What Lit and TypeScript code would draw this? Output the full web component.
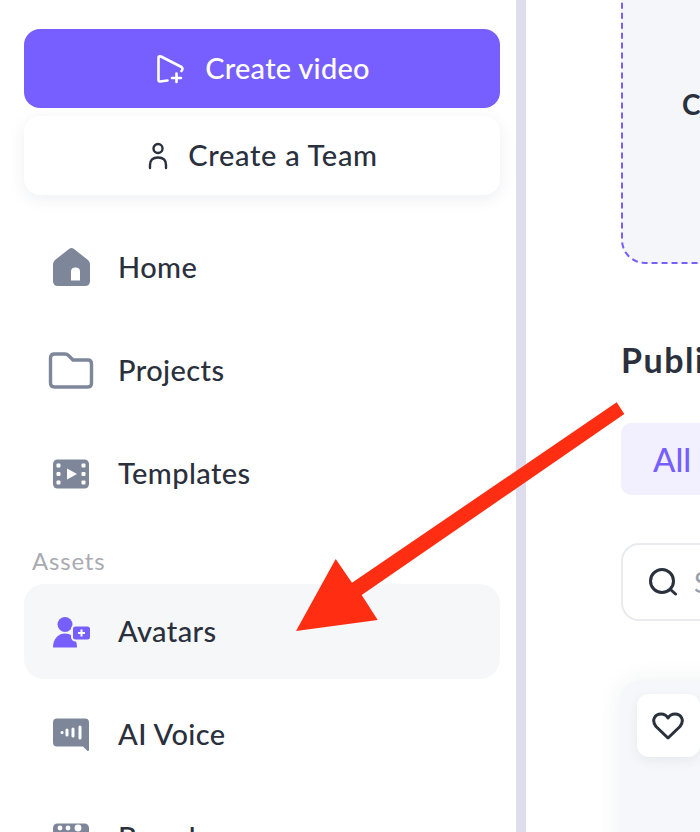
import { LitElement, html, css, svg } from "lit";
import { customElement } from "lit/decorators.js";

const navIcons = {
  home: svg`<path fill="#7e8799" d="M22 5Q24.5 3 27 5L41 16Q43 18 43 20V37Q43 42 38 42H11Q6 42 6 37V20Q6 18 8 16Z"/><path fill="#fff" d="M24 36.5V27.5Q24 23.5 28.5 23.5Q33 23.5 33 27.5V36.5Z"/>`,
  folder: svg`<path fill="none" stroke="#7e8799" stroke-width="3.4" stroke-linejoin="round" d="M3.5 11Q3.5 7 7.5 7H18Q20 7 21.5 8.5L26 13H41Q44.5 13 44.5 17V36Q44.5 40 41 40H7.5Q3.5 40 3.5 36Z"/>`,
  film: svg`<rect x="6" y="9.5" width="36" height="29" rx="4.5" fill="#7e8799"/><g fill="#fff"><rect x="9.5" y="13.5" width="4" height="4" rx="1"/><rect x="9.5" y="22" width="4" height="4" rx="1"/><rect x="9.5" y="30.5" width="4" height="4" rx="1"/><rect x="34.5" y="13.5" width="4" height="4" rx="1"/><rect x="34.5" y="22" width="4" height="4" rx="1"/><rect x="34.5" y="30.5" width="4" height="4" rx="1"/><path d="M20 18.5V29.5L30 24Z"/></g>`,
  avatar: svg`<g fill="#775fff"><circle cx="18" cy="16.5" r="7.5"/><path d="M6 39.5C6 30 12 25.5 18 25.5C24 25.5 30 30 30 39.5Z"/><rect x="25" y="17.5" width="19" height="15" rx="3.5" stroke="#f6f7f9" stroke-width="2"/></g><path fill="none" stroke="#fff" stroke-width="2" d="M34.5 21.5V28.5M31 25H38"/>`,
  voice: svg`<path fill="#7e8799" d="M10 7.5H38Q42 7.5 42 11.5V38.5Q42 41 40 39.5L36 35.5H10Q6 35.5 6 31.5V11.5Q6 7.5 10 7.5Z"/><g fill="none" stroke="#fff" stroke-width="3" stroke-linecap="round"><path d="M15 21.5H15.1M20 19V24M26 18V25M33 16V27"/></g>`,
  brand: svg`<rect x="6" y="9.5" width="36" height="29" rx="4.5" fill="#7e8799"/><g fill="#fff"><circle cx="13" cy="14" r="2.4"/><circle cx="21" cy="14" r="2.4"/><circle cx="31" cy="14" r="3.4"/></g>`,
};

@customElement("app-root")
export class AppRoot extends LitElement {
  static styles = css`
    :host {
      display: block;
      position: relative;
      width: 700px;
      height: 832px;
      overflow: hidden;
      background: #fff;
      font-family: "Lato", "Liberation Sans", sans-serif;
      color: #2a303c;
    }

    .layout {
      display: flex;
      height: 832px;
    }

    .sidebar {
      flex: none;
      box-sizing: border-box;
      width: 516px;
      padding: 29px 16px 0 24px;
    }

    .divider {
      flex: none;
      width: 10px;
      background: #dddded;
    }

    .btn {
      display: flex;
      align-items: center;
      justify-content: center;
      height: 79px;
      padding-left: 2px;
      border-radius: 16px;
      font-size: 29px;
      font-weight: 500;
    }

    .btn span,
    .item span {
      padding-bottom: 2px;
    }

    .btn.primary {
      gap: 19px;
      background: #775fff;
      color: #fff;
      letter-spacing: 0.25px;
      margin-bottom: 8px;
    }

    .btn.team {
      gap: 20px;
      background: #fff;
      letter-spacing: 0.7px;
      box-shadow: 0 4px 16px rgba(40, 50, 90, 0.08);
    }

    nav {
      display: flex;
      flex-direction: column;
      gap: 8px;
    }

    nav.top {
      margin-top: 25px;
    }

    .item {
      display: flex;
      align-items: center;
      gap: 23px;
      height: 95px;
      padding-left: 23px;
      border-radius: 20px;
      font-size: 29px;
      font-weight: 500;
      letter-spacing: 0.4px;
    }

    .item.active {
      background: #f6f7f9;
    }

    .item svg {
      flex: none;
    }

    .section {
      margin: 28px 0 11px 8px;
      line-height: 24px;
      font-size: 24px;
      letter-spacing: 0.8px;
      color: #a9abb1;
    }

    main {
      flex: none;
      box-sizing: border-box;
      width: 600px;
      padding-left: 95px;
    }

    .drop {
      box-sizing: border-box;
      height: 304px;
      margin-top: -40px;
      padding: 124px 0 0 59px;
      border: 2px dashed #775fff;
      border-radius: 24px;
      background: #f5f6f9;
      font-size: 28px;
      font-weight: 700;
      line-height: 36px;
      white-space: nowrap;
    }

    h2 {
      margin: 76px 0 0;
      font-size: 34px;
      font-weight: 700;
      letter-spacing: 1.5px;
      line-height: 40px;
      white-space: nowrap;
    }

    .tab {
      display: flex;
      align-items: center;
      box-sizing: border-box;
      width: 200px;
      height: 72px;
      margin-top: 43px;
      padding-left: 32px;
      border-radius: 10px;
      background: #f2f0fe;
      color: #775fff;
      font-size: 33px;
      font-weight: 500;
    }

    .search {
      display: flex;
      align-items: center;
      gap: 16px;
      box-sizing: border-box;
      height: 78px;
      margin-top: 48px;
      padding-left: 25px;
      border: 2px solid #eaebee;
      border-radius: 18px;
      color: #98a0ae;
      font-size: 28px;
    }

    .card {
      height: 300px;
      margin: 60px 0 0 -1px;
      padding: 13px 0 0 17px;
      border-radius: 20px;
      background: #f6f7fa;
      box-shadow: 0 0 24px rgba(40, 50, 90, 0.07);
    }

    .like {
      display: flex;
      align-items: center;
      justify-content: center;
      box-sizing: border-box;
      width: 63px;
      height: 63px;
      padding-right: 1px;
      border-radius: 12px;
      background: #fff;
      box-shadow: 0 4px 12px rgba(40, 50, 90, 0.07);
    }

    .arrow {
      position: absolute;
      inset: 0;
      pointer-events: none;
    }
  `;

  render() {
    return html`
      <div class="layout">
        <aside class="sidebar">
          <div class="btn primary">
            <svg width="30" height="30" viewBox="0 0 30 30" fill="none" stroke="#fff" stroke-width="2.6" stroke-linecap="round" stroke-linejoin="round">
              <path d="M11.5 26.5L4 27.5Q2.5 27.5 2.5 26V4Q2.5 1.5 5 2.5L25.5 13Q27.5 14.5 25.5 17"/>
              <path d="M20.5 19.5V28M16 24H25"/>
            </svg>
            <span>Create video</span>
          </div>
          <div class="btn team">
            <svg width="20" height="28" viewBox="0 0 20 28" fill="none" stroke="#2a303c" stroke-width="2.4" stroke-linecap="round">
              <circle cx="10" cy="6.5" r="4.5"/>
              <path d="M2 26V23Q2 15.5 10 15.5Q18 15.5 18 23V26"/>
            </svg>
            <span>Create a Team</span>
          </div>
          <nav class="top">
            ${this.renderItem("home", "Home")}
            ${this.renderItem("folder", "Projects")}
            ${this.renderItem("film", "Templates")}
          </nav>
          <div class="section">Assets</div>
          <nav>
            ${this.renderItem("avatar", "Avatars", true)}
            ${this.renderItem("voice", "AI Voice")}
            ${this.renderItem("brand", "Brand")}
          </nav>
        </aside>
        <div class="divider"></div>
        <main>
          <div class="drop">Create</div>
          <h2>Public Avatars</h2>
          <div class="tab">All</div>
          <div class="search">
            <svg width="30" height="28" viewBox="0 0 30 28" fill="none" stroke="#2a303c" stroke-width="3" stroke-linecap="round">
              <circle cx="14" cy="13" r="11.5"/>
              <path d="M23 22L27.5 26"/>
            </svg>
            <span>Search</span>
          </div>
          <div class="card">
            <div class="like">
              <svg width="32" height="28" viewBox="0 0 32 28" fill="none" stroke="#2a303c" stroke-width="3" stroke-linejoin="round">
                <path d="M16 26L4 14.5C-1 8 3 2 9 2C12 2 14.5 3.5 16 6C17.5 3.5 20 2 23 2C29 2 33 8 28 14.5Z"/>
              </svg>
            </div>
          </div>
        </main>
      </div>
      <svg class="arrow" width="700" height="832" viewBox="0 0 700 832">
        <polygon fill="#ff2d12" points="616.7,402.3 624.3,414 361.7,595 377.7,620 296,631 335.7,559 352,582.7"/>
      </svg>
    `;
  }

  renderItem(icon: keyof typeof navIcons, label: string, active = false) {
    return html`
      <div class="item ${active ? "active" : ""}">
        <svg width="48" height="48" viewBox="0 0 48 48">${navIcons[icon]}</svg>
        <span>${label}</span>
      </div>
    `;
  }
}
